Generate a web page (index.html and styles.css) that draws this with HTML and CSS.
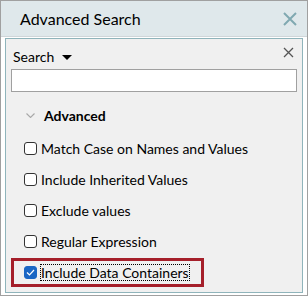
FILE: index.html
```html
<!DOCTYPE html>
<html lang="en">
<head>
    <meta charset="UTF-8">
    <title>Advanced Search</title>
    <link rel="stylesheet" href="styles.css">
</head>
<body>
    <div class="window">
        <div class="titlebar">
            <span class="title">Advanced Search</span>
            <svg class="close" width="14" height="14" viewBox="0 0 14 14"><path d="M1 1L13 13M13 1L1 13" stroke="#80a9b1" stroke-width="2"/></svg>
        </div>
        <div class="body">
            <div class="panel">
                <div class="panel-head">
                    <span class="label">Search <span class="caret"></span></span>
                    <svg class="close-small" width="11" height="11" viewBox="0 0 11 11"><path d="M1 1L10 10M10 1L1 10" stroke="#555" stroke-width="1.3"/></svg>
                </div>
                <input class="search" type="text">
                <div class="section">
                    <svg class="chevron" width="9" height="5" viewBox="0 0 9 5"><path d="M0.5 0.5L4.5 4.5L8.5 0.5" fill="none" stroke="#a8a8a8" stroke-width="1.1"/></svg>
                    <span>Advanced</span>
                </div>
                <label class="option"><span class="box"></span>Match Case on Names and Values</label>
                <label class="option"><span class="box"></span>Include Inherited Values</label>
                <label class="option"><span class="box"></span>Exclude values</label>
                <label class="option"><span class="box"></span>Regular Expression</label>
                <div class="highlight">
                    <label class="option checked"><span class="box"><svg width="9" height="7" viewBox="0 0 9 7"><path d="M1 3.5L3.5 6L8 1" fill="none" stroke="#fff" stroke-width="1.2"/></svg></span><span class="focus">Include Data Containers</span></label>
                </div>
            </div>
        </div>
    </div>
</body>
</html>
```

FILE: styles.css
```css
* {
    box-sizing: border-box;
}
html, body {
    margin: 0;
}
body {
    font-family: Lato, sans-serif;
    font-size: 14px;
    color: #000;
    background: #fff;
}
.window {
    width: 308px;
    height: 296px;
    border: 1px solid #a0a0a0;
    display: flex;
    flex-direction: column;
}
.titlebar {
    height: 36px;
    background: #dfe8eb;
    display: flex;
    align-items: center;
    justify-content: space-between;
    padding: 0 10px 0 19px;
    border-bottom: 1px solid #cfd6d9;
}
.title {
    font-size: 16px;
}
.body {
    flex: 1;
    padding: 1px 4px 2px 4px;
    display: flex;
}
.panel {
    flex: 1;
    border: 1px solid #8fb4bb;
    background: #f0f0f0;
    padding: 5px 5px 0 5px;
}
.panel-head {
    display: flex;
    justify-content: space-between;
    align-items: flex-start;
    padding-left: 2px;
    height: 25px;
}
.label {
    padding-top: 4px;
}
.caret {
    display: inline-block;
    width: 0;
    height: 0;
    border-left: 5px solid transparent;
    border-right: 5px solid transparent;
    border-top: 5px solid #000;
    margin-left: 4px;
    vertical-align: 2px;
}
.close-small {
    margin: 3px 3px 0 0;
}
.search {
    display: block;
    width: 100%;
    height: 23px;
    border: 1px solid #a0a0a0;
    background: #fff;
    margin: 0;
}
.section {
    display: flex;
    align-items: center;
    height: 41px;
    padding: 6px 0 0 15px;
    font-weight: bold;
}
.chevron {
    margin-right: 9px;
}
.option {
    display: flex;
    align-items: center;
    height: 31px;
    padding-left: 13px;
}
.box {
    width: 13px;
    height: 13px;
    border: 1px solid #333;
    border-radius: 3px;
    background: #fff;
    margin-right: 4px;
    display: flex;
    align-items: center;
    justify-content: center;
}
.checked .box {
    background: #1a66c4;
    border-color: #1a66c4;
}
.highlight {
    width: 193px;
    height: 29px;
    border: 3px solid #a51f2a;
    margin-top: 1px;
}
.highlight .option {
    height: 23px;
    padding-left: 10px;
}
.focus {
    display: inline-block;
    outline: 1px dotted #000;
    line-height: 15px;
}
```
